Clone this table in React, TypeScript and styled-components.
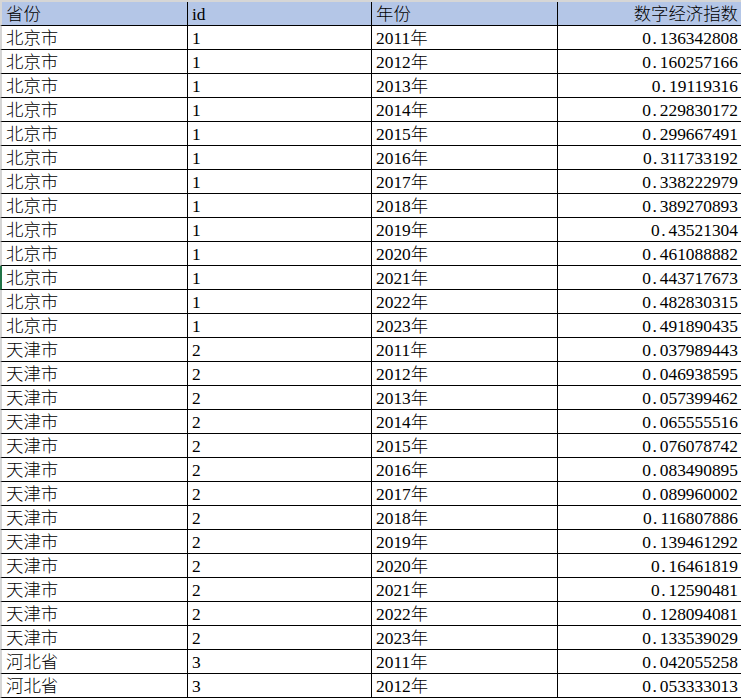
import React from "react";
import styled, { createGlobalStyle } from "styled-components";

const GlobalStyle = createGlobalStyle`
  html, body { margin: 0; padding: 0; background: #ffffff; }
  body { overflow: hidden; }
`;

const Sheet = styled.div`
  width: 741px;
  font-family: "Liberation Serif", "Noto Sans CJK SC", serif;
  font-size: 17.4px;
  font-weight: 300;
  color: #000;
`;

const Row = styled.div<{ $header?: boolean; $selected?: boolean }>`
  display: grid;
  grid-template-columns: 186px 184px 186px 1fr;
  height: 24px;
  box-sizing: border-box;
  border-left: 2px solid ${(p) => (p.$selected ? "#217346" : "#d6d6d6")};
  border-bottom: 1px solid #000;
  background: ${(p) => (p.$header ? "#b4c6e7" : "#ffffff")};
  ${(p) => (p.$header ? "border-top: 2px solid #d6d6d6; height: 26px;" : "")}
`;

const Cell = styled.div<{ $right?: boolean; $last?: boolean }>`
  box-sizing: border-box;
  height: 100%;
  line-height: 23px;
  padding: 1px ${(p) => (p.$right ? "3px" : "4px")} 0;
  text-align: ${(p) => (p.$right ? "right" : "left")};
  border-right: ${(p) => (p.$last ? "none" : "1px solid #000")};
  white-space: nowrap;
  overflow: hidden;
`;

const Dot = styled.span`
  display: inline-block;
  width: 0.5em;
  padding-left: 0.08em;
  box-sizing: border-box;
  text-align: left;
`;

const Num = ({ value }: { value: string }) => {
  const [a, b] = value.split(".");
  return (
    <>
      {a}
      <Dot>.</Dot>
      {b}
    </>
  );
};

const beijing = [
  "0.136342808", "0.160257166", "0.19119316", "0.229830172", "0.299667491",
  "0.311733192", "0.338222979", "0.389270893", "0.43521304", "0.461088882",
  "0.443717673", "0.482830315", "0.491890435",
];
const tianjin = [
  "0.037989443", "0.046938595", "0.057399462", "0.065555516", "0.076078742",
  "0.083490895", "0.089960002", "0.116807886", "0.139461292", "0.16461819",
  "0.12590481", "0.128094081", "0.133539029",
];
const hebei = ["0.042055258", "0.053333013"];

type Rec = { prov: string; id: number; year: number; val: string };

const rows: Rec[] = [
  ...beijing.map((v, i) => ({ prov: "北京市", id: 1, year: 2011 + i, val: v })),
  ...tianjin.map((v, i) => ({ prov: "天津市", id: 2, year: 2011 + i, val: v })),
  ...hebei.map((v, i) => ({ prov: "河北省", id: 3, year: 2011 + i, val: v })),
];

export default function App() {
  return (
    <>
      <GlobalStyle />
      <Sheet>
        <Row $header>
          <Cell>省份</Cell>
          <Cell>id</Cell>
          <Cell>年份</Cell>
          <Cell $right $last>数字经济指数</Cell>
        </Row>
        {rows.map((r, i) => (
          <Row key={i} $selected={i === 10}>
            <Cell>{r.prov}</Cell>
            <Cell>{r.id}</Cell>
            <Cell>{r.year}年</Cell>
            <Cell $right $last>
              <Num value={r.val} />
            </Cell>
          </Row>
        ))}
      </Sheet>
    </>
  );
}
